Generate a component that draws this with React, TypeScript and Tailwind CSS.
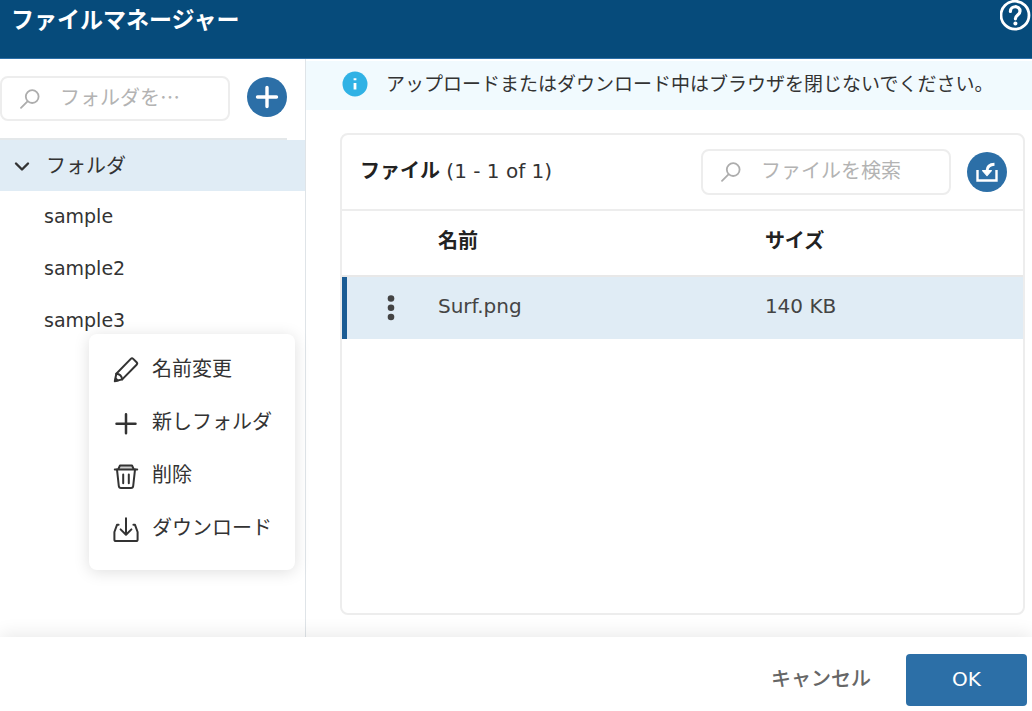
import type { ReactNode } from "react";

const stroke = {
  fill: "none",
  stroke: "currentColor",
  strokeLinecap: "round",
  strokeLinejoin: "round",
} as const;

const SearchIcon = () => (
  <svg className="size-5 shrink-0" viewBox="0 0 20 20" {...stroke} strokeWidth="1.8">
    <circle cx="12.2" cy="7.6" r="6.4" />
    <path d="M7.5 12.3 1 18.8" />
  </svg>
);

const PencilIcon = () => (
  <svg className="size-7" viewBox="0 0 28 28" {...stroke} strokeWidth="2">
    <path d="M2.8 26.2 4.3 18.8 18.8 3.9Q20 2.7 21.2 3.9L24.6 7.3Q25.8 8.5 24.6 9.7L10.2 24.4Z" />
    <path d="M4.3 18.8Q9.4 19.2 10.2 24.4" />
    <path d="M2.8 26.2 3.6 22.4 6.6 25.4Z" fill="currentColor" strokeWidth="1" />
  </svg>
);

const PlusIcon = () => (
  <svg className="size-7" viewBox="0 0 28 28" {...stroke} strokeWidth="2.5">
    <path d="M14 6.2V25.2M4.5 15.7H23.5" />
  </svg>
);

const TrashIcon = () => (
  <svg className="size-7" viewBox="0 0 28 28" {...stroke} strokeWidth="2">
    <path d="M6.4 8 8 4.4H20L21.6 8" fill="#d0d0d0" />
    <path d="M2.8 8.4H25.2" />
    <path d="M5 8.6 6.8 25Q7 27 9 27H19Q21 27 21.2 25L23 8.6" />
    <path d="M11.2 13.4V22.2M16.8 13.4V22.2" />
  </svg>
);

const DownloadIcon = () => (
  <svg className="size-7" viewBox="0 0 28 28" {...stroke} strokeWidth="2">
    <path d="M14 4.2V20.4M8.6 15.4 14 20.8 19.4 15.4" />
    <path d="M6.6 10.8H5L2.4 18V25.4Q2.4 27 4 27H24Q25.6 27 25.6 25.4V18L23 10.8H21.4" />
  </svg>
);

const folders = ["sample", "sample2", "sample3"];

const files = [{ name: "Surf.png", size: "140 KB" }];

const menuItems = [
  { label: "名前変更", icon: <PencilIcon /> },
  { label: "新しフォルダ", icon: <PlusIcon /> },
  { label: "削除", icon: <TrashIcon /> },
  { label: "ダウンロード", icon: <DownloadIcon /> },
];

const SearchBox = ({ placeholder, className }: { placeholder: string; className: string }) => (
  <label
    className={`flex items-center gap-5 rounded-lg border-2 border-[#ededed] bg-white pl-[18px] pr-2 text-[#adadad] ${className}`}
  >
    <SearchIcon />
    <input
      type="text"
      aria-label={placeholder}
      placeholder={placeholder}
      className="w-full min-w-0 pb-1 font-['Noto_Sans_CJK_JP',sans-serif] text-xl leading-7 text-[#333] outline-none placeholder:text-[#b3b3b3]"
    />
  </label>
);

const RoundButton = ({ label, children }: { label: string; children: ReactNode }) => (
  <button
    type="button"
    aria-label={label}
    className="flex size-10 shrink-0 items-center justify-center rounded-full bg-[#2c6fa7] text-white"
  >
    {children}
  </button>
);

const ContextMenu = () => (
  <ul className="absolute left-[89px] top-[39px] z-10 w-[206px] rounded-lg bg-white pb-4 pt-2 shadow-[0_2px_16px_rgba(0,0,0,0.13)]">
    {menuItems.map((item) => (
      <li key={item.label}>
        <button type="button" className="flex h-[53px] w-full items-center gap-3 pl-[23px] text-left">
          {item.icon}
          <span>{item.label}</span>
        </button>
      </li>
    ))}
  </ul>
);

const Sidebar = () => (
  <aside className="w-[306px] shrink-0 border-r border-[#dfe4e8]">
    <div className="mr-[18px] flex h-[81px] items-center gap-[17px] border-b-2 border-[#e4e8ea] pb-1">
      <SearchBox placeholder="フォルダを…" className="mt-1 h-[45px] flex-1" />
      <RoundButton label="フォルダを追加">
        <svg className="size-6" viewBox="0 0 24 24" {...stroke} strokeWidth="3.4">
          <path d="M12 2.5V21.5M2.5 12H21.5" />
        </svg>
      </RoundButton>
    </div>

    <button type="button" className="flex h-[51px] w-full items-center gap-4 bg-[#e0ecf5] pl-3.5 text-left">
      <svg className="size-4" viewBox="0 0 16 16" {...stroke} strokeWidth="2.4">
        <path d="M2 5.5 8 11.5 14 5.5" />
      </svg>
      <span>フォルダ</span>
    </button>

    <ul>
      {folders.map((folder) => (
        <li key={folder} className="relative">
          <button type="button" className="flex h-[52px] w-full items-center pb-0.5 pl-11 text-left text-[19px]">
            {folder}
          </button>
          {folder === "sample3" && <ContextMenu />}
        </li>
      ))}
    </ul>
  </aside>
);

const FileTable = () => (
  <table className="w-full table-fixed border-separate border-spacing-0 text-left">
    <thead>
      <tr className="h-[66px] text-[#222]">
        <th className="w-24 border-b-2 border-[#e8e8e8]" aria-label="操作"></th>
        <th className="w-[48%] border-b-2 border-[#e8e8e8] pb-1 font-bold">名前</th>
        <th className="border-b-2 border-[#e8e8e8] pb-1 font-bold">サイズ</th>
      </tr>
    </thead>
    <tbody>
      {files.map((file) => (
        <tr key={file.name} className="h-[62px] bg-[#e0ecf5] text-[#444]">
          <td className="border-l-[5px] border-[#1b5c94]">
            <button type="button" aria-label="メニュー" className="ml-[34px] block">
              <svg className="h-7 w-5" viewBox="0 0 20 28" fill="currentColor">
                <circle cx="10" cy="4.5" r="3.3" />
                <circle cx="10" cy="13.7" r="3.3" />
                <circle cx="10" cy="23" r="3.3" />
              </svg>
            </button>
          </td>
          <td className="pb-1">{file.name}</td>
          <td className="pb-1">{file.size}</td>
        </tr>
      ))}
    </tbody>
  </table>
);

const FilePanel = () => (
  <section className="mb-[22px] ml-[34px] mr-[7px] mt-[23px] flex-1 rounded-lg border-2 border-[#ededed]">
    <div className="flex h-[76px] items-center border-b-2 border-[#ededed] pl-[18px] pr-4">
      <h2 className="flex-1 pb-0.5 text-[#333]">
        <span className="font-bold text-[#222]">ファイル</span> (1 - 1 of 1)
      </h2>
      <SearchBox placeholder="ファイルを検索" className="mr-4 h-[46px] w-[250px]" />
      <RoundButton label="アップロード">
        <svg className="size-6" viewBox="0 0 24 24" {...stroke} strokeWidth="2.4">
          <path d="M2.5 10V20.5H21.5V10" strokeLinecap="butt" strokeLinejoin="miter" />
          <path d="M19.5 4.2Q12.2 4.4 12 11" strokeWidth="3" strokeLinecap="butt" />
          <path d="M7.6 10.6H16.4L12 15.6Z" fill="currentColor" strokeWidth="1.2" />
        </svg>
      </RoundButton>
    </div>
    <FileTable />
  </section>
);

const App = () => {
  return (
    <div
      lang="ja"
      className="flex min-h-screen flex-col bg-white font-['DejaVu_Sans','Noto_Sans_CJK_JP',sans-serif] text-xl leading-7 text-[#333]"
    >
      <header className="flex h-[59px] items-start justify-between border-b border-[#2c6fa7] bg-[#064b7b] pl-[11px] text-white">
        <h1 className="pt-1.5 text-[23px] font-bold leading-7">ファイルマネージャー</h1>
        <button type="button" aria-label="ヘルプ">
          <svg className="size-8" viewBox="0 0 32 32" {...stroke}>
            <circle cx="15" cy="15.2" r="14" strokeWidth="2.8" />
            <path d="M10.4 11.4C10.4 5.2 20 5.2 20 11.2C20 15 15.4 15 15.4 18.8" strokeWidth="3.2" />
            <circle cx="15.4" cy="23.4" r="2" fill="currentColor" stroke="none" />
          </svg>
        </button>
      </header>

      <div className="flex flex-1">
        <Sidebar />
        <main className="flex min-w-0 flex-1 flex-col">
          <div className="mt-0.5 flex h-[49px] items-center gap-[18px] bg-[#f1fafe] pb-1 pl-9">
            <svg className="size-[26px] shrink-0" viewBox="0 0 26 26">
              <circle cx="13" cy="13" r="12.5" fill="#30b2e5" />
              <path d="M13 12V18.6M13 7.2V9.2" stroke="#fff" strokeWidth="2.8" />
            </svg>
            <p className="text-[19px]">
              アップロードまたはダウンロード中はブラウザを閉じないでください。
            </p>
          </div>
          <FilePanel />
        </main>
      </div>

      <footer className="relative flex h-[74px] items-center justify-end gap-[35px] bg-white pr-[5px] pt-3 shadow-[0_-4px_16px_rgba(0,0,0,0.08)]">
        <button type="button" className="pb-0.5 font-medium text-[#666]">
          キャンセル
        </button>
        <button type="button" className="h-[52px] w-[121px] rounded bg-[#2c6fa7] pb-0.5 text-white">
          OK
        </button>
      </footer>
    </div>
  );
};

export default App;
